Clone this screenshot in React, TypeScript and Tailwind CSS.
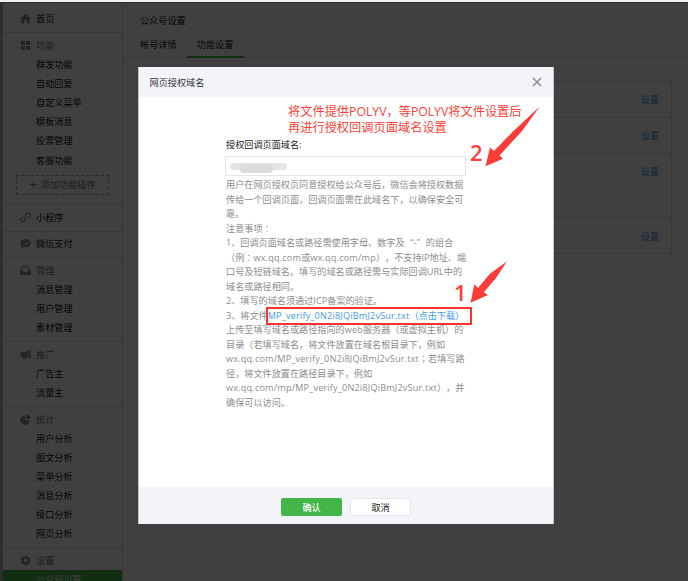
import type { ReactNode } from "react";

type Section = { icon: string; title: string; items: string[]; link?: boolean };

const sections: Section[] = [
  { icon: "grid", title: "功能", items: ["群发功能", "自动回复", "自定义菜单", "模板消息", "投票管理", "客服功能"] },
  { icon: "mini", title: "小程序", items: [], link: true },
  { icon: "pay", title: "微信支付", items: [], link: true },
  { icon: "inbox", title: "管理", items: ["消息管理", "用户管理", "素材管理"] },
  { icon: "horn", title: "推广", items: ["广告主", "流量主"] },
  { icon: "pie", title: "统计", items: ["用户分析", "图文分析", "菜单分析", "消息分析", "接口分析", "网页分析"] },
  { icon: "gear", title: "设置", items: [] },
];

const settingRows = ["h-[36px]", "h-[36px]", "h-[64.5px]", "h-[36px]"];

const icons: Record<string, ReactNode> = {
  home: <path d="M5.5 0.4 L0 5.8 H1.3 V10.2 H4.2 V7 H6.8 V10.2 H9.7 V5.8 H11 Z" />,
  grid: <path d="M0.8 1h4.2v4H0.8zM6.1 1h4.2v4H6.1zM0.8 6.1h4.2v4H0.8zM6.1 6.1h4.2v4H6.1z" />,
  mini: <path d="M3.4 5.3C1.6 5 0.6 6.3 0.8 7.7 1.2 10.2 5.3 10.2 5.4 7.6V3.4C5.5 0.8 9.6 0.7 10.2 3.2 10.4 4.6 9.5 5.8 7.8 5.6" fill="none" stroke="currentColor" strokeWidth="1.2" />,
  pay: (
    <>
      <ellipse cx="5.5" cy="5.3" rx="5.2" ry="4.2" />
      <path d="M1.2 10l0.6-3 2.4 2z" />
      <path d="M3 5.2l1.7 1.5 4.6-3" fill="none" stroke="#dedede" strokeWidth="1" />
    </>
  ),
  inbox: <path fillRule="evenodd" d="M2.4 1.2h6.2L10.9 6v4H0.1V6zM3.2 2.3L1.7 5.8h2c0.2 2 3.4 2 3.6 0h2L7.8 2.3z" />,
  horn: <path d="M0.2 3.2h5L8.4 1v8.4L5.2 7.4l0.7 2.8H3.2L2.6 7.4H1L0.2 6.6zM9 1h1.6v8.6H9z" />,
  pie: (
    <>
      <path d="M5 1.2v4.9h5A4.9 4.9 0 1 1 5 1.2z" />
      <path d="M6 0.5a4.7 4.7 0 0 1 4.5 4.6H6z" />
    </>
  ),
  gear: (
    <>
      <circle cx="5.5" cy="5.5" r="3.1" fill="none" stroke="currentColor" strokeWidth="2.5" />
      <circle cx="5.5" cy="5.5" r="4.6" fill="none" stroke="currentColor" strokeWidth="1.3" strokeDasharray="1.8 1.81" />
    </>
  ),
};

function Icon({ name }: { name: string }) {
  return (
    <svg viewBox="0 0 11 11" className="w-[11px] h-[11px] mr-[5px] shrink-0 text-[#909090]" fill="currentColor">
      {icons[name]}
    </svg>
  );
}

function Sidebar() {
  return (
    <aside className="w-[120px] shrink-0 border-r border-[#dcdcdc] text-[#111]">
      <div className="h-[29px] pl-[17px] pt-px flex items-center">
        <Icon name="home" />首页
      </div>
      {sections.map((s) => (
        <div key={s.title} className="border-t border-[#dcdcdc] pt-[2.65px] pb-[3.7px]">
          <div className={`h-[19.15px] pl-[17px] flex items-center ${s.link ? "" : "text-[#777]"}`}>
            <Icon name={s.icon} />{s.title}
          </div>
          {s.items.map((item) => (
            <div key={item} className="h-[19.15px] pl-[33px] flex items-center">{item}</div>
          ))}
          {s.icon === "grid" && (
            <div className="mt-[5px] mb-[6px] ml-[13px] w-[93px] h-[20px] border border-dashed border-[#a0a0a0] flex items-center justify-center text-[#777]">
              <span className="text-[13px] mr-[4px]">+</span>添加功能插件
            </div>
          )}
          {s.icon === "gear" && <div className="h-[19px] pl-[33px] bg-[#44b549] text-white flex items-center">公众号设置</div>}
        </div>
      ))}
    </aside>
  );
}

function Settings() {
  return (
    <main className="flex-1 text-[#222]">
      <div className="pl-[17px] pt-[6px] h-[28px] flex items-center">公众号设置</div>
      <div className="h-[27px] pl-[17px] flex border-b border-[#dadada]">
        <div className="mr-[10px] pt-[7px]">帐号详情</div>
        <div className="w-[57px] h-[27px] pt-[7px] text-center border-b-2 border-[#44b549]">功能设置</div>
      </div>
      <div className="mt-[22.5px] ml-[17px] w-[532px] border-x border-t border-[#dadada]">
        {settingRows.map((h, i) => (
          <div key={i} className={`${h} border-b border-[#dadada] flex justify-end pr-[12px] pt-[11.5px] text-[#3f92ea]`}>设置</div>
        ))}
      </div>
    </main>
  );
}

// full-width centred colons
function Mark({ children }: { children: string }) {
  return <span className="leading-none font-['Noto_Sans_CJK_JP']">{children}</span>;
}

// quotes padded out to a full-width cell
function Quote({ children, open }: { children: string; open?: boolean }) {
  return <span className={`inline-block w-[9.15px] ${open ? "text-right" : "text-left"}`}>{children}</span>;
}

function En({ children }: { children: string }) {
  return <span className="tracking-[0.18px]">{children}</span>;
}

const line = "h-[14.5px] leading-[14.5px]";

function Dialog() {
  return (
    <div className="absolute left-[138px] top-[67px] w-[416px] h-[457px] bg-white border-x border-[#c4c5c8] flex flex-col">
      <div className="h-[30px] bg-[#f3f4f9] pl-[10.5px] pr-[11px] flex items-center justify-between text-[#333]">
        网页授权域名
        <svg viewBox="0 0 10 10" className="w-[10px] h-[10px]" stroke="#8c8c8c" strokeWidth="1.5">
          <path d="M1 1l8 8M9 1l-8 8" />
        </svg>
      </div>

      <div className="flex-1 pl-[87px] text-[#8d8d8d]">
        <div className="h-[59px] pt-[41px] text-[#222]">授权回调页面域名:</div>
        <div className="-ml-px w-[241px] h-[20px] border border-[#e5e5e5] flex items-center pl-[4px]">
          <div className="relative w-[57px] h-[7px] bg-[#e4e4e4] rounded-sm">
            <div className="absolute left-[10px] top-px w-[33px] h-[9px] bg-[#dcdcdc] rounded-sm blur-[0.5px]" />
          </div>
        </div>
        <div className="pt-[2px]">
          <p className={line}>用户在网页授权页同意授权给公众号后，微信会将授权数据</p>
          <p className={line}>传给一个回调页面，回调页面需在此域名下，以确保安全可</p>
          <p className={line}>靠。</p>
          <p className={line}>注意事项<Mark>：</Mark></p>
          <p className={line}>1、回调页面域名或路径需使用字母、数字及<Quote open>“</Quote>-<Quote>”</Quote>的组合</p>
          <p className={line}>（例<Mark>：</Mark><En>wx.qq.com</En>或<En>wx.qq.com/mp</En>），不支持IP地址、端</p>
          <p className={line}>口号及短链域名。填写的域名或路径需与实际回调URL中的</p>
          <p className={line}>域名或路径相同。</p>
          <p className={line}>2、填写的域名须通过ICP备案的验证。</p>
          <p className={line}>3、将文件<a className="text-[#459ae9]"><En>MP_verify_0N2i8JQiBmJ2vSur.txt</En>（点击下载）</a></p>
          <p className={line}>上传至填写域名或路径指向的<En>web</En>服务器（或虚拟主机）的</p>
          <p className={line}>目录（若填写域名，将文件放置在域名根目录下，例如</p>
          <p className={line}><En>wx.qq.com/MP_verify_0N2i8JQiBmJ2vSur.txt</En><Mark>；</Mark>若填写路</p>
          <p className={line}>径，将文件放置在路径目录下，例如</p>
          <p className={line}><En>wx.qq.com/mp/MP_verify_0N2i8JQiBmJ2vSur.txt</En>），并</p>
          <p className={line}>确保可以访问。</p>
        </div>
      </div>

      <div className="h-[37px] bg-[#f3f4f9] flex items-center justify-center gap-[8px] pt-[3px]">
        <button className="w-[61px] h-[18px] rounded-[2px] bg-[#44b549] text-white font-medium">确认</button>
        <button className="w-[61px] h-[18px] rounded-[2px] bg-white border border-[#e4e5e8] text-[#222]">取消</button>
      </div>
    </div>
  );
}

function Annotations() {
  return (
    <div className="text-[#ff3f3a]">
      <div className="absolute left-[288px] top-[104px] text-[12.23px] leading-[15.5px]">
        <div>将文件提供POLYV，等POLYV将文件设置后</div>
        <div>再进行授权回调页面域名设置</div>
      </div>
      <div className="absolute left-[470px] top-[142px] text-[22px] leading-[21px] font-semibold">2</div>
      <div className="absolute left-[454px] top-[282px] text-[22px] leading-[21px] font-semibold">1</div>
      <svg viewBox="0 0 56 62" className="absolute left-[485px] top-[106px] w-[56px] h-[62px]" fill="#fb3b38">
        <path d="M54.8 0.5L28 25.5L9 45L5 41.5L0.5 60.3L18 52.8L14.5 49.5L37 25Z" />
      </svg>
      <svg viewBox="0 0 38 43" className="absolute left-[470px] top-[261px] w-[38px] h-[43px]" fill="#fb3b38">
        <path d="M36.8 0.6L20 12.8L8 27L4.3 23.2L0.6 41.8L18 34L13.8 31.3L26 17Z" />
      </svg>
      <div className="absolute left-[266px] top-[307px] w-[206px] h-[18px] border-2 border-[#ff3330]" />
    </div>
  );
}

export default function App() {
  return (
    <div className="relative w-[688px] h-[581px] overflow-hidden bg-white whitespace-nowrap text-[9.15px] leading-[13px] [text-spacing-trim:space-all] font-['Open_Sans','Noto_Sans_CJK_SC',sans-serif]">
      <div className="h-[2px] bg-[#eef0f3]" />
      <div className="h-[579px] border-t border-l-[3px] border-[#b8b8b8] flex">
        <Sidebar />
        <Settings />
      </div>
      <div className="absolute inset-x-0 top-[2px] bottom-0 bg-black/75" />
      <Dialog />
      <Annotations />
    </div>
  );
}
